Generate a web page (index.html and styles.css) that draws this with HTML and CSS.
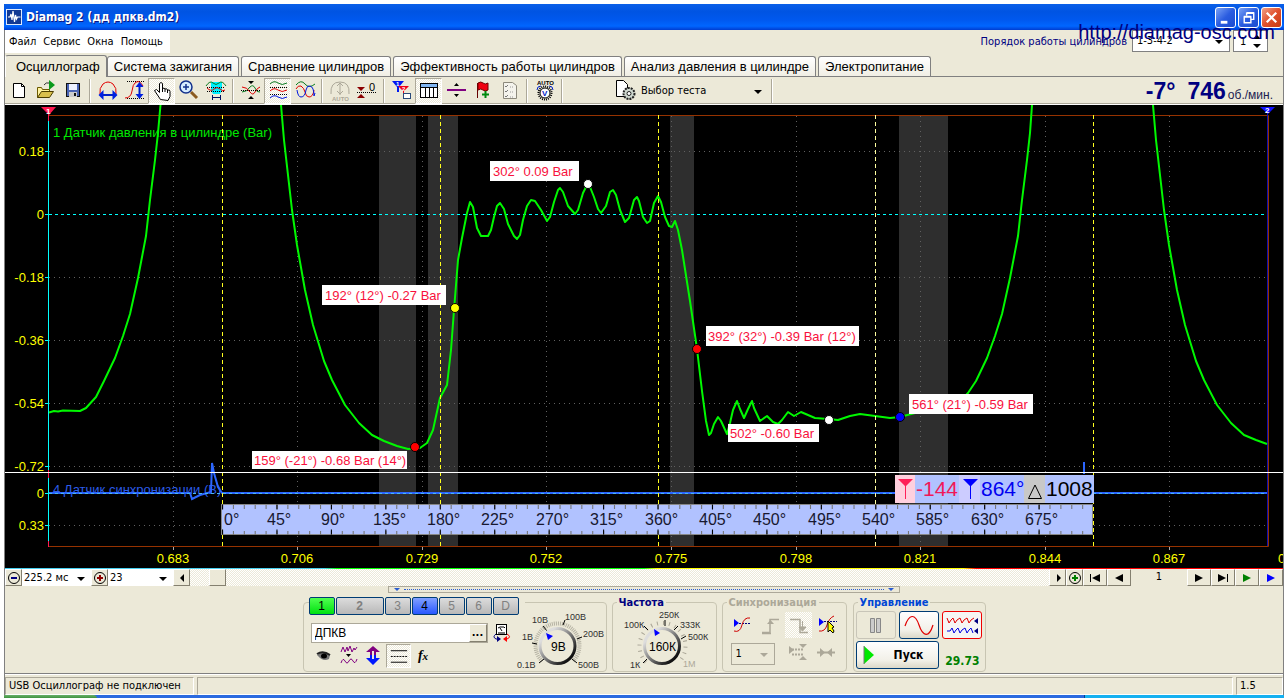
FILE: index.html
```html
<!DOCTYPE html>
<html lang="ru">
<head>
<meta charset="utf-8">
<title>Diamag 2 (дд дпкв.dm2)</title>
<link rel="stylesheet" href="styles.css">
</head>
<body>
<div class="window">
  <header class="titlebar">
    <svg class="app-icon" viewBox="0 0 16 16" aria-hidden="true"><rect x=".5" y=".5" width="15" height="15" fill="#123a94" stroke="#dfe9fb"/><path d="M2 8h2l1-3 1 6 1-9 1.500 11 1-7 1 4 1-2h3" fill="none" stroke="#fff" stroke-width="1.200"/></svg>
    <h1 class="title">Diamag 2 (дд дпкв.dm2)</h1>
    <button class="win-btn" aria-label="Свернуть"><svg viewBox="0 0 20 20"><path d="M5 15h7" stroke="#fff" stroke-width="3"/></svg></button>
    <button class="win-btn" aria-label="Восстановить"><svg viewBox="0 0 20 20"><path d="M8 8V5.500h7.500V12H13M5.500 9.500h7v6h-7zM8 5h8M5 9h8" fill="none" stroke="#fff" stroke-width="1.500"/></svg></button>
    <button class="win-btn win-close" aria-label="Закрыть"><svg viewBox="0 0 20 20"><path d="M5 5l10 10M15 5L5 15" stroke="#fff" stroke-width="2.400"/></svg></button>
  </header>
  <div class="watermark">http://diamag-osc.com</div>

  <div class="menu-row">
    <nav class="menu">
      <button>Файл</button><button>Сервис</button><button>Окна</button><button>Помощь</button>
    </nav>
    <label class="order-label" for="order">Порядок работы цилиндров</label>
    <span class="pick order"><select id="order"><option>1-3-4-2</option></select></span>
    <span class="pick spin"><input aria-label="Номер цилиндра" value="1"></span>
  </div>

  <div class="tabs" role="tablist">
    <button class="tab active" role="tab">Осциллограф</button>
    <button class="tab" role="tab">Система зажигания</button>
    <button class="tab" role="tab">Сравнение цилиндров</button>
    <button class="tab" role="tab">Эффективность работы цилиндров</button>
    <button class="tab" role="tab">Анализ давления в цилиндре</button>
    <button class="tab" role="tab">Электропитание</button>
  </div>

  <div class="toolbar">
    <button class="tool" aria-label="Новый"><svg viewBox="6 79 24 24"><path d="M12.500 83.500h8l3 3v11h-11z" fill="#fff" stroke="#000"/><path d="M20.500 83.500v3h3" fill="none" stroke="#000"/></svg></button>
    <button class="tool" aria-label="Открыть"><svg viewBox="33 79 24 24"><path d="M36.500 97.500v-10h4l1 2h7v3" fill="#fff3a0" stroke="#6b5a00"/><path d="M36.500 97.500l4-6h12l-4 6z" fill="#d9c04c" stroke="#4a3d00"/><path d="M43 85q2-3 5-2" fill="none" stroke="#333"/><path d="M48 80l6 5-6 5z" fill="#0a9a1c"/></svg></button>
    <button class="tool" aria-label="Сохранить"><svg viewBox="60 79 24 24"><rect x="65.500" y="83.500" width="13" height="13" fill="#4a64b4" stroke="#111"/><rect x="68" y="84" width="8" height="6" fill="#eef2ff"/><rect x="68" y="92" width="8" height="5" fill="#ccc"/><rect x="73" y="93" width="2" height="3" fill="#111"/></svg></button>
    <i class="sep"></i>
    <button class="tool" aria-label="Автомасштаб по горизонтали"><svg viewBox="95 79 24 24"><path d="M99 94q-1-6 3-10 5-4 10 0 4 4 3 10" fill="none" stroke="#e00000"/><path d="M101 95h12" stroke="#0020c8" stroke-width="2"/><path d="M97.500 95l5-5v10zM116.500 95l-5-5v10z" fill="#0020e0"/></svg></button>
    <button class="tool" aria-label="Автомасштаб по вертикали"><svg viewBox="122 79 24 24"><path d="M126 81.500h18M126 98.500h18" stroke="#000" stroke-dasharray="1 1"/><path d="M124 98q6 0 7-7t3-8q4-4 8 3" fill="none" stroke="#e00000"/><path d="M138.500 84v13" stroke="#0020c8" stroke-width="2"/><path d="M138.500 82l4 5h-8zM138.500 99l4-5h-8z" fill="#0020e0"/></svg></button>
    <button class="tool pressed" aria-label="Рука"><svg viewBox="150 79 24 24"><path d="M160.500 99.500l-6-9 2-1 3 3v-9q1.500-2 3 0v5q2-1 2.500.5 2-1 2.500 1 2.500-.500 2.500 1.500v5l-2 4z" fill="#fff" stroke="#000"/><path d="M162.500 88v4M165 89v3M167.500 90v3" stroke="#000"/></svg></button>
    <button class="tool" aria-label="Лупа"><svg viewBox="176 79 24 24"><path d="M190 92l6 6" stroke="#8a5a20" stroke-width="3"/><circle cx="185" cy="87" r="6" fill="#d6ecff" stroke="#12308c" stroke-width="1.500"/><path d="M182 87h6M185 84v6" stroke="#12308c" stroke-width="1.500"/></svg></button>
    <button class="tool" aria-label="Измерение интервала"><svg viewBox="203 79 24 24"><path d="M210 82h11v8l-2 4h-7l-2-4z" fill="#00f0ff"/><path d="M205 86q4-6 7-3t6 0 7 3" fill="none" stroke="#087a20"/><path d="M206 87.500h18M206 91.500h18" stroke="#000" stroke-dasharray="1 1"/><path d="M206 88q4 4 7 1t6 0 5 1" fill="none" stroke="#e00000"/><path d="M211.500 95v5M219.500 95v5M212 97.500h7" stroke="#001060"/></svg></button>
    <i class="sep"></i>
    <button class="tool" aria-label="Совместить"><svg viewBox="238 79 24 24"><path d="M241 92q5 0 8-5 3-3 5 1 2 5 5 4" fill="none" stroke="#087a20"/><path d="M241 87q5 0 8 5 3 4 5 0 2-4 5-5" fill="none" stroke="#e00000"/><path d="M240 90.500h20" stroke="#000" stroke-dasharray="1 1"/><path d="M247 81h6l-3 3zM247 99h6l-3-3z" fill="#000"/></svg></button>
    <button class="tool pressed" aria-label="Разнести"><svg viewBox="265 79 24 24"><path d="M269 98q4-4 8-1t9 0" fill="none" stroke="#0018e0"/><path d="M269 84q4-4 8-1t9 0" fill="none" stroke="#087a20"/><path d="M269 91q4-4 8-1t9 0" fill="none" stroke="#e00000"/><path d="M269 87.500h18M269 94.500h18" stroke="#000" stroke-dasharray="1 1"/></svg></button>
    <button class="tool" aria-label="Наложить"><svg viewBox="292 79 24 24"><path d="M295 85q5-6 9-1t10 0" fill="none" stroke="#087a20"/><path d="M295 89q2-4 5-3 3 2 4 6 1 5 4 5 4 0 5-7" fill="none" stroke="#e00000"/><path d="M296 90q1 7 4 7 4 0 5-7 1-5 4-4 4 1 4 10l1-3" fill="none" stroke="#0018e0"/></svg></button>
    <i class="sep"></i>
    <button class="tool" aria-label="Авто" disabled><svg viewBox="327 79 24 24"><path d="M330 94q-1-12 9-12t9 12M339 83v12M336 86l3-3 3 3M336 91l3 3 3-3" fill="none" stroke="#aca899"/><text x="331" y="101" class="micro off">AUTO</text></svg></button>
    <button class="tool" aria-label="Ноль"><svg viewBox="355 79 24 24"><path d="M357 92.500h19" stroke="#000" stroke-dasharray="1 1"/><path d="M357 87h8l-4 4zM357 98h8l-4-4z" fill="#8b0000"/><text x="369" y="91" class="icon-text">0</text></svg></button>
    <i class="sep"></i>
    <button class="tool" aria-label="Маркеры"><svg viewBox="390 79 24 24"><path d="M392 81h12l-5 6v5h-2v-5z" fill="#0018f0"/><path d="M398 86h11l-5 5v7h-1v-7z" fill="#f00018"/><text x="396" y="86" class="micro white">1</text><text x="402" y="91" class="micro white">2</text><rect x="403.500" y="93.500" width="7" height="5" fill="#fff" stroke="#2a4a7a"/></svg></button>
    <button class="tool pressed" aria-label="Таблица"><svg viewBox="417 79 24 24"><rect x="420.500" y="83.500" width="17" height="14" fill="#fff" stroke="#000"/><rect x="421" y="84" width="16" height="3" fill="#7fb4f0"/><path d="M421 87.500h17M425.500 87v11M429.500 87v11M433.500 87v11" stroke="#000"/></svg></button>
    <button class="tool" aria-label="Линия"><svg viewBox="442 79 24 24"><path d="M445 90h19" stroke="#800080" stroke-width="2"/><path d="M452 86h5l-2.500-3zM452 94h5l-2.500 3z" fill="#000"/></svg></button>
    <button class="tool" aria-label="Добавить флаг"><svg viewBox="470 79 24 24"><path d="M476.500 83v15" stroke="#600"/><path d="M477 83q3-2 5 0t5 0v7q-3 2-5 0t-5 0z" fill="#f00010" stroke="#700000"/><path d="M481 94.500h7M484.500 91v7" stroke="#008a10" stroke-width="2"/></svg></button>
    <button class="tool" aria-label="Список"><svg viewBox="497 79 24 24"><path d="M502.500 82.500h9l4 3v13h-13z" fill="#f4f3ec" stroke="#8c897c"/><path d="M504 86l1 1 2-2M504 91l1 1 2-2M504 96l1 1 2-2" fill="none" stroke="#777"/><path d="M509 87h4M509 92h4M509 97h4" stroke="#999" stroke-dasharray="1 1"/></svg></button>
    <i class="sep"></i>
    <button class="tool" aria-label="Автонастройка"><svg viewBox="532 79 24 24"><text x="536" y="85" class="micro">AUTO</text><circle cx="544" cy="93" r="6.500" fill="none" stroke="#000" stroke-width="2" stroke-dasharray="1 1"/><circle cx="544" cy="93" r="5" fill="#fff" stroke="#000"/><path d="M536 90q0-4 4-4M552 90q0-4-4-4" fill="none" stroke="#0020c8"/><text x="541" y="96" class="mark blue">V</text></svg></button>
    <i class="sep"></i>
    <span class="test-pick">
      <svg class="test-icon" viewBox="615 79 22 23"><path d="M616.500 80.500h7l4 4v12h-11z" fill="#fff" stroke="#000"/><circle cx="629" cy="93.500" r="5.500" fill="#cfd8cf" stroke="#222" stroke-width="2" stroke-dasharray="2 1"/><circle cx="629" cy="93.500" r="2" fill="#fff" stroke="#222"/></svg>
      <span class="pick"><select aria-label="Выбор теста"><option>Выбор теста</option></select></span>
    </span>
    <i class="sep"></i>
    <div class="readout"><b>-7°</b><b>746</b><span>об./мин.</span></div>
  </div>

  <svg class="scope" viewBox="5 105 1278 463" role="img" aria-label="Осциллограмма">
    <rect x="5" y="105" width="1278" height="463" fill="#000"/>
    <path class="band" d="M379 116h37v430h-37zM428 116h30v430h-30zM670 116h24v430h-24zM899 116h49v430h-49z"/>
    <path class="grid" d="M173.500 116v430M297.500 116v430M422.500 116v430M546.500 116v430M671.500 116v430M796.500 116v430M920.500 116v430M1045.500 116v430M1169.500 116v430M49 151.500h1218M49 277.500h1218M49 340.500h1218M49 403.500h1218M49 466.500h1218M49 525.500h1218"/>
    <path d="M48 115.500h1220.500v431H48" fill="none" stroke="#963200"/>
    <path d="M1267.500 112v434" stroke="#1010b0"/>
    <path d="M173.500 547v3M297.500 547v3M422.500 547v3M546.500 547v3M671.500 547v3M796.500 547v3M920.500 547v3M1045.500 547v3M1169.500 547v3" stroke="#aaa"/>
    <path d="M48.500 115v431M45 151.500h4M45 214.500h4M45 277.500h4M45 340.500h4M45 403.500h4M45 466.500h4M45 493.500h4M45 525.500h4" stroke="#00ffff"/>
    <path d="M48.500 112v9M48.500 470v8M48.500 541v6" stroke="#ff1850"/>
    <path d="M49 214.500h1218" stroke="#00ffff" stroke-dasharray="3 3"/>

    <text x="53" y="137" class="ch ch1">1 Датчик давления в цилиндре (Bar)</text>
    <text x="53" y="494" class="ch ch4">4 Датчик синхронизации (В)</text>

    <path d="M49 493h141l2 6 8-4 11-3 1-29 2 10 4 14 4 6h1045M1084 462v12M1092 493h5" fill="none" stroke="#2c66ff" stroke-width="2"/>
    <path d="M49 493.500h1218" stroke="#49b8f0" stroke-dasharray="3 3"/>

    <path class="trace" d="M49 412.500L54 411 58 411.500 63 410.500 80 411 86 408 96 397 104 381 115 358 123 336 130 314 138 278 146 236 150 200 155 160 158 133 160.500 105"/>
    <path class="trace" d="M281 105L284 140 288 175 292 210 297 245 305 290 313 325 324 361 332 380 345 405 359 423 372 435 384 441 397 446 408 449 420 448 427 443 433 430 440 398 447 385 451 350 454 310 458 260 462 238 467 213 470 202 473 207 477 228 481 236 488 236 491 230 494 217 497 206 500 203 504 209 508 224 514 236 517 239 520 235 523 220 527 206 531 200 535 201 541 210 547 221 550 217 554 202 558 190 560 188 563 192 568 206 575 214 578 210 583 193 586 187 590 187 594 197 598 209 601 213 606 206 610 192 613 190 616 195 620 210 625 222 629 218 634 200 637 197 639 201 643 217 647 223 650 221 654 203 658 196 661 202 665 217 669 226 672 227 675 221 678 230 682 250 690 301 697 349 702 391 706 421 709 435 711 433 714 424 718 417 721 421 727 434 730 423 733 410 737 401 740 409 744 418 748 409 752 401 754 408 760 421 767 416 773 422 778 424 782 420 788 412 794 416 801 412 808 415 815 418 828 419 838 420 850 416 860 414 875 416 890 418 900 417 915 413 940 410 958 404 968 393 976 381 987 358 995 336 1002 314 1010 278 1018 236 1022 200 1027 160 1030 133 1032 105"/>
    <path class="trace" d="M1153 105L1156 140 1160 175 1164 210 1169 245 1177 290 1185 325 1196 361 1204 380 1217 405 1231 423 1244 435 1256 440 1267 444"/>

    <path d="M222.500 115v431M440.500 115v431M658.500 115v431M1093.500 115v431" stroke="#ffff20" stroke-dasharray="4 3"/>
    <path d="M875.500 115v431" stroke="#ffffa0" stroke-dasharray="4 3"/>
    <path d="M5 472.500h1278" stroke="#fff"/>

    <g class="axis" text-anchor="end">
      <text x="44" y="156">0.18</text><text x="44" y="219">0</text><text x="44" y="282">-0.18</text><text x="44" y="345">-0.36</text><text x="44" y="408">-0.54</text><text x="44" y="471">-0.72</text><text x="44" y="498">0</text><text x="44" y="530">0.33</text>
    </g>
    <g class="axis" text-anchor="middle">
      <text x="173" y="563">0.683</text><text x="297" y="563">0.706</text><text x="422" y="563">0.729</text><text x="546" y="563">0.752</text><text x="671" y="563">0.775</text><text x="796" y="563">0.798</text><text x="920" y="563">0.821</text><text x="1045" y="563">0.844</text><text x="1169" y="563">0.867</text>
    </g>
    <text x="1278" y="563" class="axis">0</text>

    <path d="M41 107h15l-7 8z" fill="#ff1850"/><text x="46" y="114" class="mark white">1</text>
    <path d="M1260 107h15l-7 7z" fill="#1010ff"/><text x="1265" y="113" class="mark white">2</text>

    <rect x="221.500" y="504.500" width="871" height="30" fill="#b1c2ff" stroke="#888"/>
    <path d="M222 507h871" class="tick-minor" pathLength="800"/><path d="M222 533h871" class="tick-minor" pathLength="800"/>
    <path d="M222 507h871" class="tick-major" pathLength="800"/><path d="M222 532h871" class="tick-major" pathLength="800"/>
    <g class="deg">
      <text x="224" y="525">0°</text><text x="267" y="525">45°</text><text x="321" y="525">90°</text><text x="373" y="525">135°</text><text x="427" y="525">180°</text><text x="481" y="525">225°</text><text x="536" y="525">270°</text><text x="590" y="525">315°</text><text x="645" y="525">360°</text><text x="699" y="525">405°</text><text x="753" y="525">450°</text><text x="808" y="525">495°</text><text x="862" y="525">540°</text><text x="916" y="525">585°</text><text x="971" y="525">630°</text><text x="1025" y="525">675°</text>
    </g>

    <rect x="895" y="475" width="199" height="28" fill="#b1c2ff"/>
    <rect x="895" y="475" width="20" height="28" fill="#ffd0de"/><rect x="959" y="475" width="21" height="28" fill="#ccccff"/><rect x="1024" y="475" width="21" height="28" fill="#c8c8c8"/>
    <path d="M898 479h15l-7 7v13h-1v-13z" fill="#ff2058"/><path d="M963 479h15l-7 7v13h-1v-13z" fill="#0000ff"/>
    <path d="M1028.500 498.500h13l-6.500-13.500z" fill="none" stroke="#000"/>
    <g class="cursor-text"><text x="916" y="496" fill="#f01858">-144</text><text x="981" y="496" fill="#0000f0">864°</text><text x="1046" y="496" fill="#000">1008</text></g>

    <path d="M490 161h89v20h-89zM322 285h124v20H322zM706 326h153v20H706zM909 394h124v20H909zM728 424h91v18h-91zM252 451h155v18H252z" fill="#fff"/>
    <g class="note"><text x="493" y="176">302° 0.09 Bar</text><text x="325" y="300">192° (12°) -0.27 Bar</text><text x="708" y="341">392° (32°) -0.39 Bar (12°)</text><text x="912" y="409">561° (21°) -0.59 Bar</text><text x="730" y="438">502° -0.60 Bar</text><text x="254" y="465">159° (-21°) -0.68 Bar (14°)</text></g>
    <g stroke="#000"><circle cx="588" cy="184" r="4.500" fill="#fff"/><circle cx="829" cy="420" r="4.500" fill="#fff"/><circle cx="455" cy="308" r="4.500" fill="#ff0"/><circle cx="415" cy="447" r="4.500" fill="#f00"/><circle cx="697" cy="349" r="4.500" fill="#f00"/><circle cx="900" cy="417" r="4.500" fill="#00f"/></g>
  </svg>

  <div class="overview"></div>
  <div class="scroll-row">
    <button class="raised sq" aria-label="Уменьшить"><svg viewBox="0 0 14 14"><circle cx="7" cy="7" r="5.500" fill="#ece9d8" stroke="#000"/><path d="M4 7h6" stroke="#000080" stroke-width="2"/></svg></button>
    <span class="pick scale"><select aria-label="Развёртка"><option>225.2 мс</option></select></span>
    <button class="raised sq" aria-label="Увеличить"><svg viewBox="0 0 14 14"><circle cx="7" cy="7" r="5.500" fill="#ece9d8" stroke="#000"/><path d="M4 7h6M7 4v6" stroke="#900000" stroke-width="2"/></svg></button>
    <span class="pick zoomlevel"><select aria-label="Масштаб"><option>23</option></select></span>
    <button class="raised sq" aria-label="Влево"><svg viewBox="0 0 14 14"><path d="M9 3v8L5 7z"/></svg></button>
    <input class="track" type="range" min="0" max="1000" value="22" aria-label="Прокрутка">
    <button class="raised sq" aria-label="Вправо"><svg viewBox="0 0 14 14"><path d="M6 3v8l4-4z"/></svg></button>
    <button class="raised sq" aria-label="Добавить"><svg viewBox="0 0 14 14"><circle cx="7" cy="7" r="5.500" fill="#ece9d8" stroke="#000"/><path d="M4 7h6M7 4v6" stroke="#008000" stroke-width="2"/></svg></button>
    <button class="raised nav" aria-label="В начало"><svg viewBox="0 0 14 14"><path d="M2 3h1v8H2zM12 3v8L4 7z"/></svg></button>
    <button class="raised nav" aria-label="Предыдущий"><svg viewBox="0 0 14 14"><path d="M11 3v8L3 7z"/></svg></button>
    <output class="page">1</output>
    <button class="raised nav" aria-label="Следующий"><svg viewBox="0 0 14 14"><path d="M3 3v8l8-4z"/></svg></button>
    <button class="raised nav" aria-label="В конец"><svg viewBox="0 0 14 14"><path d="M2 3v8l8-4zM11 3h1v8h-1z"/></svg></button>
    <button class="raised nav" aria-label="Воспроизвести"><svg viewBox="0 0 14 14"><path d="M3 3v8l8-4z" fill="#008000"/></svg></button>
    <button class="raised nav" aria-label="Воспроизвести всё"><svg viewBox="0 0 14 14"><path d="M3 3v8l8-4z" fill="#0000ff"/></svg></button>
  </div>
  <div class="grip"><i></i><span></span><i></i></div>

  <main class="panel">
    <fieldset class="group channels">
      <legend class="channel-tabs">
        <button class="chan on1">1</button><button class="chan wide">2</button><button class="chan">3</button><button class="chan on4">4</button><button class="chan">5</button><button class="chan">6</button><button class="chan">D</button>
      </legend>
      <div class="channel-body">
        <div class="channel-main">
          <div class="sensor">
            <span class="sensor-box"><input aria-label="Датчик" value="ДПКВ"><button class="raised dots" aria-label="Выбрать датчик">...</button></span>
            <svg class="ic20" viewBox="491 622 20 22"><rect x="495.500" y="624.500" width="10" height="10" fill="#fff" stroke="#000"/><path d="M497 628l2-1 4 0 1 1M501 631l-2-3" fill="none" stroke="#000"/><rect x="497" y="632" width="7" height="2" fill="#777"/><path d="M495 634q-4 3 0 5h3" fill="none" stroke="#000080"/><path d="M496 636l4 3-4 3z" fill="#000080"/><path d="M506 634q5 3 0 5h-2" fill="none" stroke="#f00"/><path d="M506 636l-4 3 4 3z" fill="#f00"/></svg>
          </div>
          <div class="chan-tools">
            <button class="tool" aria-label="Видимость"><svg viewBox="312 645 24 24"><path d="M318 656q6-5 13 0l-1 4q-6 3-11-3z" fill="#777"/><path d="M318 655q6-4 13 1" fill="none" stroke="#222" stroke-width="2"/><ellipse cx="325" cy="657" rx="3" ry="2.500" fill="#000"/></svg></button>
            <button class="tool" aria-label="Сглаживание"><svg viewBox="336 645 24 24"><path d="M341 653l2-5 2 5 2-5 1 4 2-5 2 6 2-4 1 2 2-3M341 664q2-6 4-2t4 0 4 0 4-2" fill="none" stroke="#800080"/><path d="M346 655h5l-2.500 3z"/></svg></button>
            <button class="tool" aria-label="Инверсия"><svg viewBox="362 645 24 24"><path d="M374 647l7 6h-4v3h-2v-4h-2v4h-2v-3h-4z" fill="#800080"/><path d="M374 666l7-7h-4v-3h-2v4h-2v-4h-2v3h-4z" fill="#0018ff"/></svg></button>
            <button class="tool pressed" aria-label="Линии"><svg viewBox="388 645 24 24"><path d="M392 651.500h17M392 663.500h17" stroke="#000"/><path d="M392 657.500h17" stroke="#000" stroke-dasharray="2 1"/></svg></button>
            <button class="tool fx" aria-label="Функция">f<sub>x</sub></button>
          </div>
        </div>
        <svg class="knob" viewBox="516 607 90 64" role="img" aria-label="Диапазон 9В">
          <defs><linearGradient id="rim" x1="0" y1="0" x2="1" y2="1"><stop offset=".2" stop-color="#ddd"/><stop offset=".85" stop-color="#111"/></linearGradient></defs>
          <path d="M542 661A22 22 0 1 1 573 661" fill="none" stroke="#b5b2a3" stroke-width="4" stroke-dasharray="1 1"/>
          <path d="M544 659l-5 4M537 644l-5-1M547 631l-4-5M563 625l2-5M577 639l5-2M572 659l5 4" stroke="#000"/>
          <circle cx="557.500" cy="646" r="17.500" fill="#ece9d8" stroke="url(#rim)" stroke-width="3"/><path d="M546 633l7 3-5 4z" fill="#00f"/>
          <text x="551" y="651" class="dial">9В</text>
          <g class="scale-text"><text x="517" y="668">0.1В</text><text x="522" y="640">1В</text><text x="532" y="623">10В</text><text x="565" y="620">100В</text><text x="583" y="637">200В</text><text x="578" y="668">500В</text></g>
        </svg>
      </div>
    </fieldset>

    <fieldset class="group freq">
      <legend class="navy">Частота</legend>
      <svg class="knob-freq" viewBox="612 607 103 64" role="img" aria-label="Частота 160К">
        <path d="M645 662A23 23 0 1 1 678 662" fill="none" stroke="#aaa697" stroke-width="4" stroke-dasharray="1 5"/>
        <path d="M646 659l-4 4M647 630l-4-4M664 626v-6M673 630l4-4M680 639l5-3" stroke="#000"/>
        <circle cx="661" cy="646" r="17.500" fill="#ece9d8" stroke="url(#rim)" stroke-width="3"/><path d="M653 629l6 4-5 3z" fill="#00f"/>
        <text x="648" y="651" class="dial">160К</text>
        <g class="scale-text"><text x="629" y="668">1К</text><text x="623" y="628">100К</text><text x="658" y="618">250К</text><text x="679" y="628">333К</text><text x="687" y="640">500К</text><text x="682" y="667" class="off">1М</text></g>
      </svg>
    </fieldset>

    <fieldset class="group sync">
      <legend class="off-legend">Синхронизация</legend>
      <div class="sync-row">
        <button class="tool" aria-label="Синхронизация"><svg viewBox="730 613 24 24"><path d="M734 619v8l5-4z" fill="#00f"/><path d="M739 623.500h12" stroke="#000080" stroke-dasharray="2 1"/><path d="M734 631q6 2 8-6t8-7" fill="none" stroke="#d00000"/></svg></button>
        <button class="tool" aria-label="По фронту" disabled><svg viewBox="758 613 24 24"><path d="M762 632.500h8v-13h9M762 633.500h9" fill="none" stroke="#aca899" stroke-width="1.500"/><path d="M767 624l3.500-4 3.500 4z" fill="#aca899"/></svg></button>
        <button class="tool hatched" aria-label="По спаду" disabled><svg viewBox="786 613 24 24"><path d="M790 619.500h10v13h8" fill="none" stroke="#aca899" stroke-width="1.500"/><path d="M799 627h7l-3.500 4zM802.500 621v8" fill="#aca899" stroke="#aca899"/></svg></button>
        <button class="tool" aria-label="Ручной выбор"><svg viewBox="813 613 24 24"><path d="M818 618v8l5-4z" fill="#00f"/><path d="M823 621.500h13" stroke="#000080" stroke-dasharray="2 1"/><path d="M818 631q6 1 8-6t7-9" fill="none" stroke="#d00000"/><path d="M827 621v11l2-2 3 3 1-2-2-3 2-1z" fill="#ff0" stroke="#000"/></svg></button>
      </div>
      <div class="sync-row">
        <span class="pick sync-pick"><select aria-label="Канал синхронизации"><option>1</option></select></span>
        <button class="tool" aria-label="Уровень" disabled><svg viewBox="788 643 24 24"><path d="M791 647v8l5-4zM801 645h8l-4 4zM801 661h8l-4-4z" fill="#aca899"/><path d="M794 650.500h11M794 655.500h11" stroke="#aca899" stroke-width="2" stroke-dasharray="2 1"/></svg></button>
        <button class="tool" aria-label="Центр" disabled><svg viewBox="815 643 24 24"><path d="M818 653.500h18" stroke="#aca899" stroke-width="2"/><path d="M821 649l5 4.500-5 4.500zM833 649l-5 4.500 5 4.500z" fill="#aca899"/></svg></button>
      </div>
    </fieldset>

    <fieldset class="group control">
      <legend class="blue-legend">Управление</legend>
      <div class="control-grid">
        <button class="xp" aria-label="Пауза" disabled><svg viewBox="0 0 38 26"><path d="M13.500 6.500h4v14h-4zM19.500 6.500h4v14h-4z" fill="#ccc" stroke="#888"/></svg></button>
        <button class="xp" aria-label="Синус"><svg viewBox="0 0 38 26"><path d="M5 14C9 2 15 1 19 13S29 26 33 13" fill="none" stroke="#e00000" stroke-width="1.200"/></svg></button>
        <button class="xp red" aria-label="Запись"><svg viewBox="0 0 38 26"><path d="M4 6l2 5 2-3 2-2 2 5 2-3 3-2 2 5 2-3 3-2 2 5 2-3 3-2" fill="none" stroke="#e00000"/><path d="M4 19h3l2-3 2 5 2-3 2-2 2 5 2-3 3-2 2 5 2-3 2-2 2 5" fill="none" stroke="#0000e0"/><path d="M35 6v6l-4-3zM35 16v6l-4-3z" fill="#000080"/></svg></button>
        <button class="xp start"><svg class="play" viewBox="0 0 12 20"><path d="M1 1v18l10-9z" fill="#00e800"/><path d="M1 1v18" stroke="#777"/></svg>Пуск</button>
        <output class="fps">29.73</output>
      </div>
    </fieldset>
  </main>

  <footer class="status"><div class="cell first">USB Осциллограф не подключен</div><div class="cell mid"></div><div class="cell last">1.5</div></footer>
</div>
<div class="taskbar"><i class="start-edge"></i><i class="tray-edge"></i></div>
</body>
</html>
```
FILE: styles.css
```css
* { box-sizing: border-box; }
body {
  margin: 0;
  padding: 4px 4px 0 4px;
  background: #fff;
  color: #000;
  font: 11px/14px "DejaVu Sans Condensed", "Noto Sans", sans-serif;
}
button, input, select { font: inherit; color: inherit; margin: 0; padding: 0; border: 0; background: none; border-radius: 0; }
svg { display: block; }
.window { position: relative; background: #ece9d8; border-left: 1px solid #808080; border-right: 1px solid #808080; }

.titlebar {
  display: flex; align-items: center; gap: 2px; height: 26px; padding: 0 2px; margin: 0 -1px;
  background: linear-gradient(#0a5fe8, #0054e3 30%, #0058ee 60%, #0066ff 85%, #003dd0);
}
.app-icon { width: 16px; height: 16px; }
.title { flex: 1; margin: 0 0 0 2px; color: #fff; font-size: 12px; font-weight: bold; text-shadow: 1px 1px #0a1883; }
.win-btn { width: 21px; height: 21px; border: 1px solid #fff; border-radius: 3px; background: linear-gradient(135deg, #7aa2f5, #2a5ce0 50%, #1a4cd0); }
.win-close { background: linear-gradient(135deg, #f0a088, #e0502c 50%, #c83c14); }
.watermark { position: absolute; top: 16px; right: 8px; color: #000080; font: 20px/24px "Liberation Sans", sans-serif; z-index: 2; }

.menu-row { display: flex; align-items: flex-start; height: 25px; padding-right: 15px; }
.menu { display: flex; gap: 7px; height: 23px; padding: 0 7px 0 4px; background: #fff; margin-right: auto; }
.order-label { color: #000080; line-height: 24px; margin-right: 5px; }
.pick { position: relative; display: inline-block; background: #fff; }
.pick select, .pick input { appearance: none; width: 100%; height: 100%; padding: 0 4px; border-radius: 0; opacity: 1; }
.pick::after { content: ""; position: absolute; right: 6px; top: 50%; margin-top: -1px; border: 4px solid transparent; border-top-color: #000; border-bottom: 0; pointer-events: none; }
.order, .spin { height: 22px; border: 1px solid #808080; }
.order { width: 98px; margin-right: 3px; }
.spin { width: 35px; }
.spin input { padding: 0 6px; }
.spin::after { margin-top: 3px; }
.spin::before { content: ""; position: absolute; right: 6px; top: 4px; border: 4px solid transparent; border-bottom-color: #000; border-top: 0; }

.tabs { display: flex; align-items: flex-end; gap: 2px; height: 22px; border-bottom: 1px solid #808080; }
.tab { height: 20px; padding: 0 6px; border: 1px solid #808080; border-bottom: 0; border-radius: 3px 3px 0 0; background: linear-gradient(#fff, #f0eee4); font: 13px/19px "Liberation Sans", sans-serif; white-space: nowrap; }
.tab.active { height: 22px; padding-left: 10px; margin: 0 -2px -1px 0; background: #ece9d8; border-left-color: #fff; }

.toolbar { display: flex; align-items: center; height: 28px; border-bottom: 1px solid #fff; box-shadow: inset 0 -1px #aca899; }
.tool { flex: none; display: flex; align-items: center; justify-content: center; width: 27px; height: 26px; }
.tool svg { width: 24px; height: 24px; }
.hatched, .pressed { background: repeating-conic-gradient(#fff 0 25%, #ece9d8 0 50%) 0 0 / 2px 2px; }
.pressed { border: 1px solid; border-color: #aca899 #fff #fff #aca899; }
.sep { flex: none; width: 2px; height: 24px; margin: 0 3px; border-left: 1px solid #aca899; border-right: 1px solid #fff; }
.test-pick { display: flex; align-items: center; width: 202px; padding-left: 49px; gap: 0; }
.test-icon { width: 22px; height: 23px; flex: none; }
.test-pick .pick { flex: 1; height: 22px; background: none; }
.readout { display: flex; align-items: baseline; gap: 12px; margin-left: auto; padding-right: 10px; color: #000080; }
.readout b { font: bold 23px/26px "Liberation Sans", sans-serif; }
.readout span { margin-left: -10px; font: 12px/14px "Liberation Sans", sans-serif; color: #202050; }
.micro { font: bold 6px "Liberation Sans", sans-serif; }
.mark { font: bold 8px "Liberation Sans", sans-serif; }
.white { fill: #fff; }
.blue { fill: #0020c8; }
.off { fill: #aca899; }
.icon-text { font: 11px "Liberation Sans", sans-serif; }

.scope { width: 100%; height: auto; font-family: "Liberation Sans", sans-serif; }
.band { fill: #2e2e2e; }
.grid { stroke: #606060; stroke-dasharray: 1 4; }
.trace { fill: none; stroke: #00f800; stroke-width: 2; stroke-linejoin: round; }
.ch { font-size: 13px; }
.ch1 { fill: #00e800; }
.ch4 { fill: #2c5ce8; }
.axis { font-size: 13px; fill: #ffff00; }
.note { font-size: 13px; fill: #f8103c; }
.deg { font-size: 16px; fill: #181830; }
.cursor-text { font-size: 21px; }
.tick-minor { stroke: #777; stroke-width: 4; stroke-dasharray: 1 9; }
.tick-major { stroke: #000; stroke-width: 5; stroke-dasharray: 1 49; }

.overview { height: 1px; background: linear-gradient(90deg, #48d0f0 25%, #00ff00 26% 50%, #ffff00 51% 75%, #ff0000 76%); }
.scroll-row { display: flex; height: 17px; line-height: 16px; }
.raised { display: flex; align-items: center; justify-content: center; border: 1px solid; border-color: #fff #848070 #848070 #fff; background: #ece9d8; }
.raised svg { width: 14px; height: 14px; }
.sq { flex: none; width: 17px; }
.nav { flex: none; width: 24px; }
.scale { width: 69px; }
.zoomlevel { width: 65px; }
.scale select, .zoomlevel select { padding: 0 2px; }
.track { appearance: none; flex: 1; min-width: 0; height: 17px; background: repeating-conic-gradient(#fff 0 25%, #ece9d8 0 50%) 0 0 / 2px 2px; }
.track::-webkit-slider-thumb { appearance: none; width: 17px; height: 17px; border: 1px solid; border-color: #fff #848070 #848070 #fff; background: #ece9d8; }
.page { flex: none; width: 56px; text-align: center; }
.grip { display: flex; align-items: center; width: 40%; height: 7px; margin: 0 auto; padding: 0 5px; gap: 4px; border: 1px solid #aca899; }
.grip i { border: 3px solid transparent; border-top-color: #2a5cd0; border-bottom: 0; }
.grip span { flex: 1; border-top: 1px dotted #2a5cd0; }

.panel { display: flex; justify-content: center; gap: 5px; padding: 4px 0 1px; min-height: 80px; border-bottom: 1px solid #808080; }
.group { min-width: 0; margin: 0; padding: 0; border: 1px solid #c8c5b2; border-radius: 4px; }
.group legend { height: 10px; margin-left: 4px; padding: 0 2px; font-weight: bold; line-height: 12px; }
.navy { color: #000080; }
.off-legend { color: #aca899; }
.blue-legend { color: #0046d5; }
.channels { width: 304px; }
.group .channel-tabs { display: flex; gap: 1px; margin-left: 5px; padding: 0 6px 0 0; font-weight: normal; }
.chan { width: 26px; height: 18px; border: 1px solid #003c74; border-radius: 2px; background: linear-gradient(#dcdcdc, #b8b8b8); color: #808080; font: 12px/16px "Liberation Sans", sans-serif; }
.chan.wide { width: 48px; font-weight: bold; }
.chan.on1 { background: linear-gradient(#50ff50, #00e010); color: #000; }
.chan.on4 { background: linear-gradient(#80a0ff, #2858ff); color: #000; }
.channel-body { display: flex; justify-content: space-between; }
.channel-main { padding: 15px 0 0 7px; }
.sensor { display: flex; align-items: center; gap: 4px; }
.sensor-box { display: flex; width: 177px; height: 20px; border: 1px solid #aca899; background: #fff; }
.sensor-box input { flex: 1; min-width: 0; padding: 0 3px; font: 12px/16px "Liberation Sans", sans-serif; }
.dots { width: 18px; font-weight: bold; line-height: 8px; }
.ic20 { width: 20px; height: 22px; }
.chan-tools { display: flex; }
.chan-tools .tool { width: 25px; height: 24px; }
.chan-tools .fx { font: italic bold 14px/20px "Liberation Serif", serif; }
.fx sub { font-size: 11px; line-height: 8px; }
.knob { width: 90px; height: 64px; }
.knob-freq { width: 103px; height: 64px; }
.knob, .knob-freq { font-family: "Liberation Sans", sans-serif; }
.scale-text { font-size: 9px; fill: #303030; }
.scale-text .off { fill: #aca899; }
.dial { font-size: 12px; }
.freq { width: 105px; }
.sync { width: 125px; }
.sync-row { display: flex; align-items: center; gap: 1px; padding: 5px 6px 0; }
.sync-row + .sync-row { padding: 3px 6px 0 8px; }
.sync-pick { width: 47px; height: 22px; margin-right: 9px; border: 1px solid #aca899; background: none; }
.sync-pick::after { border-top-color: #aca899; }
.control { width: 133px; margin-left: 1px; }
.control-grid { display: grid; grid-template-columns: 40px 40px 40px; gap: 2px 3px; padding: 4px 2px 0; }
.xp { display: flex; align-items: center; justify-content: center; height: 28px; border: 1px solid #003c74; border-radius: 3px; background: linear-gradient(#fff, #f2f0e8 70%, #dcd8c8); }
.xp svg { width: 38px; height: 26px; }
.xp:disabled { border-color: #c8c5b8; background: #ece9d8; }
.xp.red { border-color: #f00000; background: #f6f6f4; }
.xp.start { grid-column: span 2; gap: 19px; padding-right: 8px; font-weight: bold; font-size: 12px; }
.xp.start .play { width: 12px; height: 20px; }
.fps { align-self: end; padding-right: 2px; text-align: right; color: #008000; font-weight: bold; font-size: 12px; line-height: 16px; }

.status { display: flex; gap: 3px; height: 21px; padding-top: 2px; border-top: 1px solid #fff; }
.cell { border: 1px solid; border-color: #aca899 #fff #fff #aca899; padding: 1px 3px 0; line-height: 14px; white-space: nowrap; }
.first { width: 189px; }
.mid { flex: 1; }
.last { width: 47px; }
.taskbar { display: flex; justify-content: space-between; height: 4px; background: #2a6ae0; }
.start-edge { width: 93px; background: linear-gradient(#6ab06a, #2f8a30); border-radius: 0 4px 0 0; }
.tray-edge { width: 200px; background: #14b0f0; border-left: 1px solid #0a3c90; }
```
